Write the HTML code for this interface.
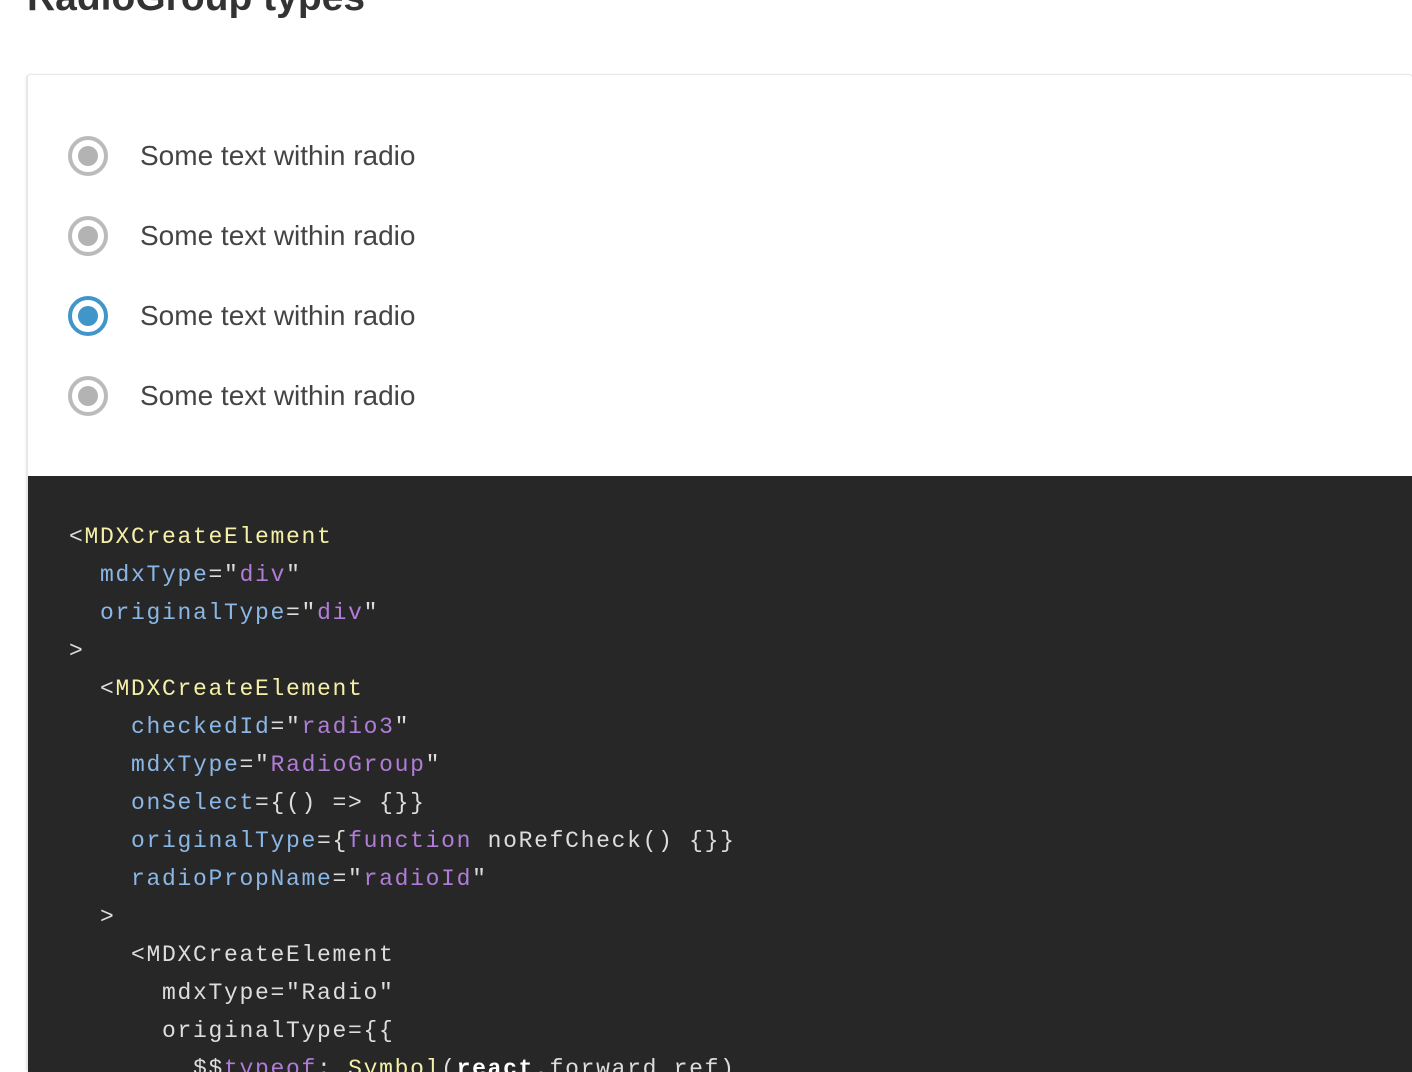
<!DOCTYPE html>
<html><head><meta charset="utf-8"><style>
html,body{margin:0;padding:0;background:#fff;width:1412px;height:1072px;overflow:hidden;position:relative}
h1{position:absolute;left:27px;top:-23px;margin:0;font:bold 39px "Liberation Sans",sans-serif;color:#333;line-height:42px}
.card{position:absolute;left:26px;top:74px;width:1384px;height:996px;border:1px solid #e6e6e6;border-left:2px solid #e8e8e8;border-radius:4px;box-shadow:0 1px 3px rgba(0,0,0,.08)}
.row{position:absolute;left:68px;height:40px;display:flex;align-items:center}
.r{width:32px;height:32px;border:4px solid #bbb;border-radius:50%;position:relative}
.r::after{content:"";position:absolute;left:6px;top:6px;width:20px;height:20px;border-radius:50%;background:#b3b3b3}
.r.on{border-color:#4096c8}.r.on::after{background:#4096c8}
.row span{margin-left:32px;font:28px "Liberation Sans",sans-serif;color:#444}
.code{position:absolute;left:28px;top:476px;width:1384px;height:596px;background:#272727;overflow:hidden}
pre{margin:0;position:absolute;left:41px;top:42px;font:23px "Liberation Mono",monospace;letter-spacing:1.7px;line-height:38px;color:#ddd}
.y{color:#f5f0a8}.b{color:#8ab7e6}.p{color:#b07cd8}.w{color:#fff}
</style></head><body>
<h1>RadioGroup types</h1>
<div class="card"></div>
<div class="row" style="top:136px"><div class="r"></div><span>Some text within radio</span></div>
<div class="row" style="top:216px"><div class="r"></div><span>Some text within radio</span></div>
<div class="row" style="top:296px"><div class="r on"></div><span>Some text within radio</span></div>
<div class="row" style="top:376px"><div class="r"></div><span>Some text within radio</span></div>
<div class="code"><pre>&lt;<span class="y">MDXCreateElement</span>
  <span class="b">mdxType</span>="<span class="p">div</span>"
  <span class="b">originalType</span>="<span class="p">div</span>"
&gt;
  &lt;<span class="y">MDXCreateElement</span>
    <span class="b">checkedId</span>="<span class="p">radio3</span>"
    <span class="b">mdxType</span>="<span class="p">RadioGroup</span>"
    <span class="b">onSelect</span>={() =&gt; {}}
    <span class="b">originalType</span>={<span class="p">function</span> noRefCheck() {}}
    <span class="b">radioPropName</span>="<span class="p">radioId</span>"
  &gt;
    &lt;MDXCreateElement
      mdxType="Radio"
      originalType={{
        $$<span class="p">typeof</span>: <span class="y">Symbol</span>(<b class="w">react</b>.forward_ref)</pre></div>
</body></html>
